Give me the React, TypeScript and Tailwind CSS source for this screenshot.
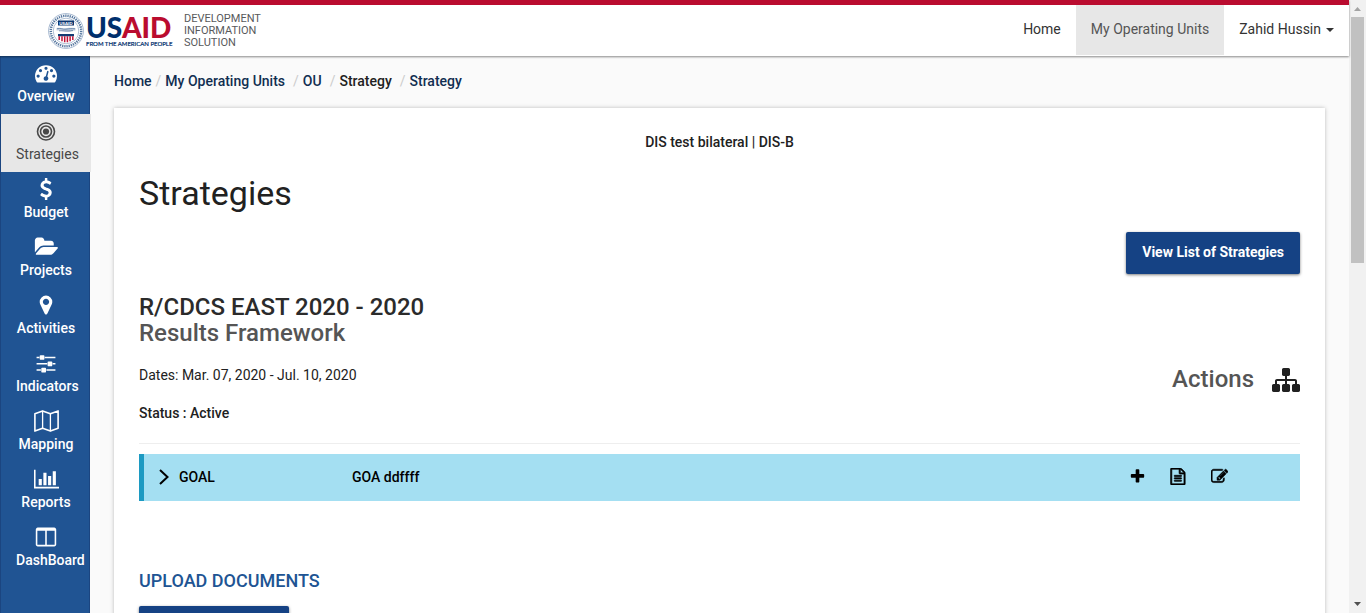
import React from "react";

type IconProps = { d: string; box?: string; className: string };

function Icon({ d, box = "0 0 1792 1792", className }: IconProps) {
  return (
    <svg viewBox={box} className={className} fill="currentColor" aria-hidden="true">
      <path d={d} />
    </svg>
  );
}

const paths = {
  gauge:
    "M384 1152q0-53-37.5-90.5t-90.5-37.5-90.5 37.5-37.5 90.5 37.5 90.5 90.5 37.5 90.5-37.5 37.5-90.5zm192-448q0-53-37.5-90.5t-90.5-37.5-90.5 37.5-37.5 90.5 37.5 90.5 90.5 37.5 90.5-37.5 37.5-90.5zm428 481l101-382q6-26-7.5-48.5t-38.5-29.5-48 6.5-30 39.5l-101 382q-60 5-107 43.5t-63 98.5q-20 77 20 146t117 89 146-20 89-117q16-60-6-117t-72-91zm660-33q0-53-37.5-90.5t-90.5-37.5-90.5 37.5-37.5 90.5 37.5 90.5 90.5 37.5 90.5-37.5 37.5-90.5zm-640-640q0-53-37.5-90.5t-90.5-37.5-90.5 37.5-37.5 90.5 37.5 90.5 90.5 37.5 90.5-37.5 37.5-90.5zm448 192q0-53-37.5-90.5t-90.5-37.5-90.5 37.5-37.5 90.5 37.5 90.5 90.5 37.5 90.5-37.5 37.5-90.5zm320 448q0 261-141 483-19 29-54 29h-1402q-35 0-54-29-141-221-141-483 0-182 71-348t191-286 286-191 348-71 348 71 286 191 191 286 71 348z",
  dollar:
    "M1362 1185q0 153-99.5 263.5t-258.5 136.5v175q0 14-9 23t-23 9h-135q-13 0-22.5-9.5t-9.5-22.5v-175q-66-9-127.5-31t-101.5-44.5-74-48-46.5-37.5-17.5-18q-17-21-2-41l103-135q7-10 23-12 15-2 24 9l2 2q113 99 243 125 37 8 74 8 81 0 142.5-43t61.5-122q0-28-15-53t-33.5-42-58.5-37.5-66-32-80-32.5q-39-16-61.5-25t-61.5-26.5-62.5-31-56.5-35.5-53.5-42.5-43.5-49-35.5-58-21-66.5-8.5-78q0-138 98-242t255-134v-180q0-13 9.5-22.5t22.5-9.5h135q14 0 23 9t9 23v176q57 6 110.5 23t87 33.5 63.5 37.5 39 29 15 14q17 18 5 38l-81 146q-8 15-23 16-14 3-27-7-3-3-14.5-12t-39-26.5-58.5-32-74.5-26-85.5-11.5q-95 0-155 43t-60 111q0 26 8.5 48t29.5 41.5 39.5 33 56 31 60.5 27 70 27.5q53 20 81 31.5t76 35 75.5 42.5 62 50 53 63.5 31.5 76.5 13 94z",
  folder:
    "M1879 952q0 31-31 66l-336 396q-43 51-120.5 86.5t-143.5 35.5h-1088q-34 0-60.5-13t-26.5-43q0-31 31-66l336-396q43-51 120.5-86.5t143.5-35.5h1088q34 0 60.5 13t26.5 43zm-343-344v160h-832q-94 0-197 47.5t-164 119.5l-337 396-5 6q0-4-.5-12.5t-.5-12.5v-960q0-92 66-158t158-66h320q92 0 158 66t66 158v32h544q92 0 158 66t66 158z",
  marker:
    "M1152 640q0-106-75-181t-181-75-181 75-75 181 75 181 181 75 181-75 75-181zm256 0q0 109-33 179l-364 774q-16 33-47.5 52t-67.5 19-67.5-19-46.5-52l-365-774q-33-70-33-179 0-212 150-362t362-150 362 150 150 362z",
  sliders:
    "M480 1408v128h-352v-128h352zm352-128q26 0 45 19t19 45v256q0 26-19 45t-45 19h-256q-26 0-45-19t-19-45v-256q0-26 19-45t45-19h256zm160-384v128h-864v-128h864zm-640-512v128h-224v-128h224zm1312 1024v128h-736v-128h736zm-960-1152q26 0 45 19t19 45v256q0 26-19 45t-45 19h-256q-26 0-45-19t-19-45v-256q0-26 19-45t45-19h256zm640 512q26 0 45 19t19 45v256q0 26-19 45t-45 19h-256q-26 0-45-19t-19-45v-256q0-26 19-45t45-19h256zm320 128v128h-224v-128h224zm0-512v128h-864v-128h864z",
  chart:
    "M640 896v512h-256v-512h256zm384-512v1024h-256v-1024h256zm1024 1152v128h-2048v-1536h128v1408h1920zm-640-896v768h-256v-768h256zm384-384v1152h-256v-1152h256z",
  columns:
    "M160 1536h608v-1152h-640v1120q0 13 9.5 22.5t22.5 9.5zm1376-32v-1120h-640v1152h608q13 0 22.5-9.5t9.5-22.5zm128-1216v1216q0 66-47 113t-113 47h-1344q-66 0-113-47t-47-113v-1216q0-66 47-113t113-47h1344q66 0 113 47t47 113z",
  sitemap:
    "M1792 1248v320q0 40-28 68t-68 28h-320q-40 0-68-28t-28-68v-320q0-40 28-68t68-28h96v-192h-512v192h96q40 0 68 28t28 68v320q0 40-28 68t-68 28h-320q-40 0-68-28t-28-68v-320q0-40 28-68t68-28h96v-192h-512v192h96q40 0 68 28t28 68v320q0 40-28 68t-68 28h-320q-40 0-68-28t-28-68v-320q0-40 28-68t68-28h96v-192q0-52 38-90t90-38h512v-192h-96q-40 0-68-28t-28-68v-320q0-40 28-68t68-28h320q40 0 68 28t28 68v320q0 40-28 68t-68 28h-96v192h512q52 0 90 38t38 90v192h96q40 0 68 28t28 68z",
  plus:
    "M1600 736v192q0 40-28 68t-68 28h-416v416q0 40-28 68t-68 28h-192q-40 0-68-28t-28-68v-416h-416q-40 0-68-28t-28-68v-192q0-40 28-68t68-28h416v-416q0-40 28-68t68-28h192q40 0 68 28t28 68v416h416q40 0 68 28t28 68z",
  file:
    "M1596 380q28 28 48 76t20 88v1152q0 40-28 68t-68 28h-1344q-40 0-68-28t-28-68v-1600q0-40 28-68t68-28h896q40 0 88 20t76 48zm-444-244v376h376q-10-29-22-41l-313-313q-12-12-41-22zm384 1528v-1024h-416q-40 0-68-28t-28-68v-416h-768v1536h1280zm-1024-864q0-14 9-23t23-9h704q14 0 23 9t9 23v64q0 14-9 23t-23 9h-704q-14 0-23-9t-9-23v-64zm736 224q14 0 23 9t9 23v64q0 14-9 23t-23 9h-704q-14 0-23-9t-9-23v-64q0-14 9-23t23-9h704zm0 256q14 0 23 9t9 23v64q0 14-9 23t-23 9h-704q-14 0-23-9t-9-23v-64q0-14 9-23t23-9h704z",
  edit:
    "M888 1184l116-116-152-152-116 116v56h96v96h56zm440-720q-16-16-33 1l-350 350q-17 17-1 33t33-1l350-350q17-17 1-33zm80 594v190q0 119-84.5 203.5t-203.5 84.5h-832q-119 0-203.5-84.5t-84.5-203.5v-832q0-119 84.5-203.5t203.5-84.5h832q63 0 117 25 15 7 18 23 3 17-9 29l-49 49q-14 14-32 8-23-6-45-6h-832q-66 0-113 47t-47 113v832q0 66 47 113t113 47h832q66 0 113-47t47-113v-126q0-13 9-22l64-64q15-15 35-7t20 29zm-96-738l288 288-672 672h-288v-288zm444 132l-92 92-288-288 92-92q28-28 68-28t68 28l152 152q28 28 28 68t-28 68z",
};

function BullseyeIcon() {
  return (
    <svg viewBox="0 0 22 22" className="size-[22px]" fill="none" stroke="currentColor" strokeWidth="1.6" aria-hidden="true">
      <circle cx="11" cy="11.5" r="8.5" />
      <circle cx="11" cy="11.5" r="5.5" />
      <circle cx="11" cy="11.5" r="3.1" fill="currentColor" stroke="none" />
    </svg>
  );
}

function MapIcon() {
  return (
    <svg viewBox="0 0 25 22" className="h-[22px] w-[25px]" fill="none" stroke="currentColor" strokeWidth="1.6" strokeLinejoin="round" aria-hidden="true">
      <path d="M.9 3.700 8.600.9l7.800 2.800L24.100.9v17.400l-7.700 2.800-7.800-2.800-7.700 2.800z" />
      <path d="M8.600 1v17.300M16.400 3.700V21" strokeWidth="1.300" />
    </svg>
  );
}

const size = "size-[22px]";
const wide = "h-[22px] w-[25px]";

const sections: { label: string; icon: React.ReactNode }[] = [
  { label: "Overview", icon: <Icon d={paths.gauge} className={size} /> },
  { label: "Strategies", icon: <BullseyeIcon /> },
  { label: "Budget", icon: <Icon d={paths.dollar} className={size} /> },
  { label: "Projects", icon: <Icon d={paths.folder} box="-40 0 1972 1792" className={wide} /> },
  { label: "Activities", icon: <Icon d={paths.marker} className={size} /> },
  { label: "Indicators", icon: <Icon d={paths.sliders} className={size} /> },
  { label: "Mapping", icon: <MapIcon /> },
  { label: "Reports", icon: <Icon d={paths.chart} box="0 0 2048 1792" className={wide} /> },
  { label: "DashBoard", icon: <Icon d={paths.columns} box="-64 0 1792 1792" className={size} /> },
];

function Logo() {
  return (
    <svg viewBox="0 0 126 38" className="h-[38px] w-[126px] overflow-visible" role="img" aria-label="USAID">
      <circle cx="18" cy="19" r="17.4" fill="#fff" stroke="#8fa6c4" strokeWidth=".8" />
      <circle cx="18" cy="19" r="15.2" fill="none" stroke="#56779f" strokeWidth="2.4" strokeDasharray="1.3 .9" />
      <circle cx="18" cy="19" r="12.8" fill="#fff" stroke="#8fa6c4" strokeWidth=".7" />
      <path d="M10 8.500h16v5H10z" fill="#0b3570" />
      <text x="18" y="12.6" textAnchor="middle" fill="#fff" fontFamily="Lato" fontWeight="900" fontSize="4.4">USAID</text>
      <path d="M8.500 16c3-.8 5 .2 7 .4s5-1 9-.6l3 .3v2.400c-4 .2-5 1.400-9 1s-5.500-1.200-10-.9z" fill="#c3cfdf" />
      <path d="M9 16.700c4-.8 6 .9 9 .5s5-.8 9-.4M11 18.800c4-.3 6 .9 14-.2" fill="none" stroke="#5a789f" strokeWidth=".8" />
      <path d="M10 22h16v2.300H10z" fill="#123c74" />
      <path d="M11.200 24.300v3.600M14 24.300v4.900M16.700 24.300v6M19.400 24.300v6M22.100 24.300v4.900M24.800 24.300v3.600" stroke="#c01338" strokeWidth="1.500" />
      <text x="38" y="26" fontFamily="Lato, sans-serif" fontWeight="900" fontSize="28" fill="#002f6c">
        US<tspan fill="#ba0c2f">AID</tspan>
      </text>
      <text x="38" y="34" fontFamily="Lato, sans-serif" fontWeight="400" fontSize="6" fill="#002f6c" stroke="#002f6c" strokeWidth=".2">
        FROM THE AMERICAN PEOPLE
      </text>
    </svg>
  );
}

function Header() {
  return (
    <header className="relative z-10 flex h-14 shrink-0 items-start justify-between border-t-[5px] border-[#ba0c2f] bg-white shadow-[0_1px_2px_rgba(0,0,0,0.45)]">
      <a href="#" className="flex gap-2.5 pt-[7px] pl-12">
        <Logo />
        <span className="w-24 pt-px text-[11px] leading-3 text-[#58595b]">DEVELOPMENT INFORMATION SOLUTION</span>
      </a>
      <nav className="flex h-[50px] items-stretch leading-5 text-[#333]">
        <a href="#" className="px-[15px] pt-3.5">Home</a>
        <a href="#" className="bg-[#e7e7e7] px-[15px] pt-3.5 text-[#555]">My Operating Units</a>
        <button type="button" className="flex gap-[5px] px-[15px] pt-3.5">
          Zahid Hussin
          <svg viewBox="0 0 8 4" className="mt-[9px] h-1 w-2" fill="currentColor" aria-hidden="true">
            <path d="M0 0h8L4 4z" />
          </svg>
        </button>
      </nav>
    </header>
  );
}

function Sidebar() {
  return (
    <nav className="w-[90px] shrink-0 border-x border-[#1b4580] bg-[#205493] text-white">
      {sections.map(({ label, icon }) => (
        <a
          key={label}
          href="#"
          className={
            label === "Strategies"
              ? "flex h-[58px] w-[90px] flex-col bg-[#e7e7e7] px-[15px] pt-1.5 text-[#484848]"
              : "flex h-[58px] w-[90px] flex-col px-[15px] pt-1.5 font-medium"
          }
        >
          <span className="flex justify-center">{icon}</span>
          <span className="flex min-w-full justify-center self-start leading-6 whitespace-nowrap">{label}</span>
        </a>
      ))}
    </nav>
  );
}

function Scrollbar() {
  return (
    <div className="flex w-[17px] shrink-0 flex-col items-center bg-[#f1f1f1]" aria-hidden="true">
      <svg viewBox="0 0 17 17" className="size-[17px] shrink-0" fill="#a3a3a3">
        <path d="M5 11h7L8.500 7z" />
      </svg>
      <div className="h-[246px] w-[13px] bg-[#c1c1c1]" />
      <svg viewBox="0 0 17 17" className="mt-auto size-[17px] shrink-0" fill="#505050">
        <path d="M5 6h7l-3.500 4z" />
      </svg>
    </div>
  );
}

const crumbs = ["Home", "My Operating Units", "OU", "Strategy", "Strategy"];

export default function App() {
  return (
    <div className="flex h-screen overflow-hidden bg-[#fafafa] font-['Roboto',sans-serif] text-sm text-[#212121]">
      <div className="flex min-w-0 flex-1 flex-col">
        <Header />
        <div className="flex min-h-0 flex-1">
          <Sidebar />
          <main className="min-w-0 flex-1 overflow-hidden px-6 pt-[15px]">
            <ol className="flex font-medium leading-5 text-[#112e51]">
              {crumbs.map((crumb, i) => (
                <li key={i} className={i > 1 ? "ml-1 flex" : "flex"}>
                  {i > 0 && <span className="px-1 font-normal text-[#ccc]">/</span>}
                  {i === 3 ? <span className="text-[#212121]">{crumb}</span> : <a href="#">{crumb}</a>}
                </li>
              ))}
            </ol>

            <section className="mt-[17px] bg-white px-[25px] pt-6 pb-20 shadow-[0_0_4px_rgba(0,0,0,0.25)]">
              <p className="text-center font-medium leading-5">DIS test bilateral | DIS-B</p>
              <h1 className="mt-[21px] text-[34px] leading-10">Strategies</h1>
              <div className="mt-[19px] flex justify-end">
                <button type="button" className="h-[42px] rounded-xs bg-[#154284] px-4 pb-0.5 font-bold text-white shadow-[0_1px_3px_rgba(0,0,0,0.5)]">
                  View List of Strategies
                </button>
              </div>
              <h2 className="mt-5 text-2xl leading-[26px] font-medium text-[#2b2b2b]">
                R/CDCS EAST 2020 - 2020
                <span className="block text-[#555]">Results Framework</span>
              </h2>
              <div className="mt-[19px] flex justify-between">
                <div>
                  <p className="leading-5">Dates: Mar. 07, 2020 - Jul. 10, 2020</p>
                  <p className="mt-[18px] font-medium leading-5">Status : Active</p>
                </div>
                <div className="flex h-7 items-center gap-[18px]">
                  <span className="text-2xl font-medium text-[#555]">Actions</span>
                  <button type="button" aria-label="Hierarchy">
                    <Icon d={paths.sitemap} className="mt-0.5 size-7" />
                  </button>
                </div>
              </div>
              <hr className="mt-5 border-[#eee]" />
              <div className="mt-2.5 flex h-[47px] items-center border-l-[5px] border-[#1c9ac2] bg-[#a4dff2] pr-[72px] pb-0.5 font-medium text-black">
                <button type="button" className="flex w-[208px] items-center gap-2.5 pl-[15px]">
                  <svg viewBox="0 0 10 16" className="h-4 w-2.5" fill="none" stroke="currentColor" strokeWidth="2" aria-hidden="true">
                    <path d="M1 1l7.500 7L1 15" />
                  </svg>
                  GOAL
                </button>
                <span className="flex-1">GOA ddffff</span>
                <div className="flex items-center gap-6">
                  <button type="button" aria-label="Add">
                    <Icon d={paths.plus} className="size-[17px]" />
                  </button>
                  <button type="button" aria-label="Details">
                    <Icon d={paths.file} box="64 0 1792 1792" className="size-[17px] stroke-black stroke-[70]" />
                  </button>
                  <button type="button" aria-label="Edit">
                    <Icon d={paths.edit} className="size-[17px] stroke-black stroke-[60]" />
                  </button>
                </div>
              </div>
              <h3 className="mt-[70px] text-lg leading-5 font-medium text-[#205493]">UPLOAD DOCUMENTS</h3>
              <button type="button" aria-label="Upload documents" className="mt-[15px] h-[42px] w-[150px] rounded-xs bg-[#154284] shadow-[0_1px_3px_rgba(0,0,0,0.5)]" />
            </section>
          </main>
        </div>
      </div>
      <Scrollbar />
    </div>
  );
}
